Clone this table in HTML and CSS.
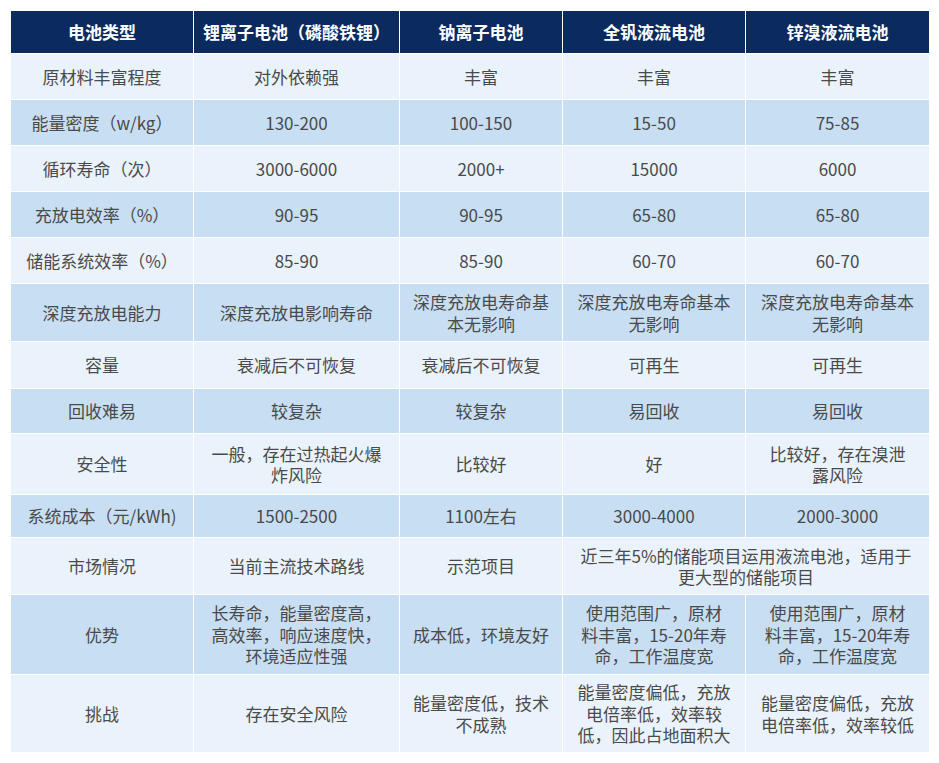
FILE: index.html
```html
<!DOCTYPE html>
<html lang="zh">
<head>
<meta charset="utf-8">
<link rel="stylesheet" href="styles.css">
</head>
<body>
<table class="cmp">
  <colgroup>
    <col class="c1"><col class="c2"><col class="c3"><col class="c4"><col class="c5">
  </colgroup>
  <thead>
    <tr class="h43">
      <th>电池类型</th><th>锂离子电池（磷酸铁锂）</th><th>钠离子电池</th><th>全钒液流电池</th><th>锌溴液流电池</th>
    </tr>
  </thead>
  <tbody>
    <tr class="h46 lt"><td>原材料丰富程度</td><td>对外依赖强</td><td>丰富</td><td>丰富</td><td>丰富</td></tr>
    <tr class="h46 dk"><td>能量密度（w/kg）</td><td>130-200</td><td>100-150</td><td>15-50</td><td>75-85</td></tr>
    <tr class="h46 lt"><td>循环寿命（次）</td><td>3000-6000</td><td>2000+</td><td>15000</td><td>6000</td></tr>
    <tr class="h46 dk"><td>充放电效率（%）</td><td>90-95</td><td>90-95</td><td>65-80</td><td>65-80</td></tr>
    <tr class="h46 lt"><td>储能系统效率（%）</td><td>85-90</td><td>85-90</td><td>60-70</td><td>60-70</td></tr>
    <tr class="h58 dk"><td>深度充放电能力</td><td>深度充放电影响寿命</td><td>深度充放电寿命基<br>本无影响</td><td>深度充放电寿命基本<br>无影响</td><td>深度充放电寿命基本<br>无影响</td></tr>
    <tr class="h47 lt"><td>容量</td><td>衰减后不可恢复</td><td>衰减后不可恢复</td><td>可再生</td><td>可再生</td></tr>
    <tr class="h45 dk"><td>回收难易</td><td>较复杂</td><td>较复杂</td><td>易回收</td><td>易回收</td></tr>
    <tr class="h61 lt"><td>安全性</td><td>一般，存在过热起火爆<br>炸风险</td><td>比较好</td><td>好</td><td>比较好，存在溴泄<br>露风险</td></tr>
    <tr class="h43 dk"><td>系统成本（元/kWh)</td><td>1500-2500</td><td>1100左右</td><td>3000-4000</td><td>2000-3000</td></tr>
    <tr class="h57 lt"><td>市场情况</td><td>当前主流技术路线</td><td>示范项目</td><td colspan="2">近三年5%的储能项目运用液流电池，适用于<br>更大型的储能项目</td></tr>
    <tr class="h80 dk"><td>优势</td><td>长寿命，能量密度高，<br>高效率，响应速度快，<br>环境适应性强</td><td>成本低，环境友好</td><td>使用范围广，原材<br>料丰富，15-20年寿<br>命，工作温度宽</td><td>使用范围广，原材<br>料丰富，15-20年寿<br>命，工作温度宽</td></tr>
    <tr class="h78 lt"><td>挑战</td><td>存在安全风险</td><td>能量密度低，技术<br>不成熟</td><td>能量密度偏低，充放<br>电倍率低，效率较<br>低，因此占地面积大</td><td>能量密度偏低，充放<br>电倍率低，效率较低</td></tr>
  </tbody>
</table>
</body>
</html>
```
FILE: styles.css
```css
html, body {
  margin: 0;
  padding: 0;
  background: #ffffff;
}
body {
  padding: 10px;
  font-family: "Noto Sans CJK SC", "Noto Sans", sans-serif;
}
.cmp {
  width: 919px;
  table-layout: fixed;
  border-collapse: collapse;
  font-size: 17px;
  line-height: 21.5px;
  color: #4a4a4a;
}
.c1 { width: 183px; }
.c2 { width: 206px; }
.c3 { width: 163px; }
.c4 { width: 183px; }
.c5 { width: 184px; }
.cmp th, .cmp td {
  border: 1px solid #ffffff;
  padding: 0 3px;
  text-align: center;
  vertical-align: middle;
  white-space: nowrap;
}
.cmp th {
  background: #0b2a5e;
  color: #ffffff;
  font-weight: 700;
}
.lt td { background: #eaf3fb; }
.dk td { background: #c8def2; }
.h43 { height: 43px; }
.h45 { height: 45px; }
.h46 { height: 46px; }
.h47 { height: 47px; }
.h57 { height: 57px; }
.h58 { height: 58px; }
.h61 { height: 61px; }
.h78 { height: 78px; }
.h80 { height: 80px; }
```
